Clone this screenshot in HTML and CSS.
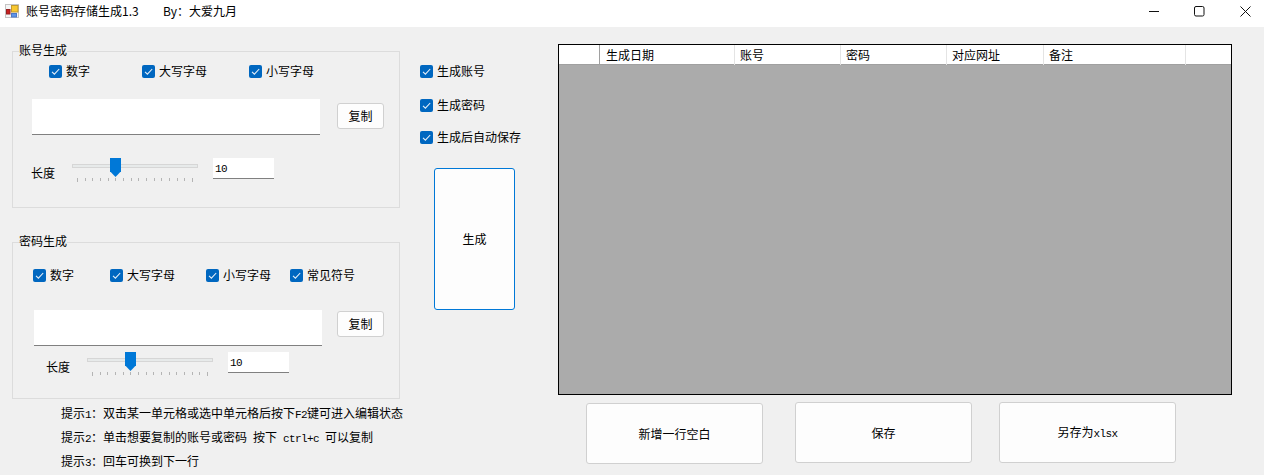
FILE: index.html
```html
<!DOCTYPE html>
<html>
<head>
<meta charset="utf-8">
<title>账号密码存储生成1.3</title>
<link rel="stylesheet" href="styles.css">
</head>
<body>
<svg class="defs" width="0" height="0">
  <symbol id="tick" viewBox="0 0 13 13">
    <rect width="13" height="13" rx="2" fill="#0067c0"/>
    <path d="M3 6.8 5.4 9.2 10.2 4" fill="none" stroke="#e6eff8" stroke-width="1.1"/>
  </symbol>
</svg>

<header class="titlebar">
  <svg class="app-icon" width="14" height="14" viewBox="0 0 14 14">
    <rect x="0.5" y="0.5" width="13" height="13" fill="#f4f4f4" stroke="#c4c4c4"/>
    <rect x="6.5" y="1.5" width="6.5" height="6.5" fill="#f8c830" stroke="#c09a30"/>
    <rect x="1.5" y="5.5" width="3.5" height="4.5" fill="#c82020" stroke="#982020"/>
    <rect x="6.5" y="9.5" width="5" height="3.5" fill="#5f94e8" stroke="#4a78c8"/>
  </svg>
  <span class="app-title">账号密码存储生成1.3</span>
  <span class="app-by">By：大爱九月</span>
  <div class="win-btns">
    <svg width="11" height="11" viewBox="0 0 11 11"><path d="M1 5.5H11" stroke="#111"/></svg>
    <svg width="11" height="11" viewBox="0 0 11 11"><rect x="0.5" y="0.5" width="9.5" height="9.5" rx="1.5" fill="none" stroke="#111"/></svg>
    <svg width="11" height="11" viewBox="0 0 11 11"><path d="M0.5 0.5 10.5 10.5M10.5 0.5 0.5 10.5" stroke="#111"/></svg>
  </div>
</header>

<main class="form">
  <section class="left">
    <fieldset class="group group-account">
      <legend>账号生成</legend>
      <div class="checks account-checks">
        <label class="check"><svg><use href="#tick"/></svg>数字</label>
        <label class="check"><svg><use href="#tick"/></svg>大写字母</label>
        <label class="check"><svg><use href="#tick"/></svg>小写字母</label>
      </div>
      <div class="output-row">
        <div class="textbox"></div>
        <button class="btn copy" type="button">复制</button>
      </div>
      <div class="length-row">
        <span class="length-label">长度</span>
        <div class="slider">
          <div class="track"></div>
          <div class="thumb"></div>
          <div class="ticks"><i></i><i></i><i></i><i></i><i></i><i></i><i></i><i></i><i></i><i></i><i></i><i></i><i></i><i></i><i></i><i></i></div>
        </div>
        <div class="numbox">10</div>
      </div>
    </fieldset>

    <fieldset class="group group-password">
      <legend>密码生成</legend>
      <div class="checks password-checks">
        <label class="check"><svg><use href="#tick"/></svg>数字</label>
        <label class="check"><svg><use href="#tick"/></svg>大写字母</label>
        <label class="check"><svg><use href="#tick"/></svg>小写字母</label>
        <label class="check"><svg><use href="#tick"/></svg>常见符号</label>
      </div>
      <div class="output-row">
        <div class="textbox"></div>
        <button class="btn copy" type="button">复制</button>
      </div>
      <div class="length-row">
        <span class="length-label">长度</span>
        <div class="slider">
          <div class="track"></div>
          <div class="thumb"></div>
          <div class="ticks"><i></i><i></i><i></i><i></i><i></i><i></i><i></i><i></i><i></i><i></i><i></i><i></i><i></i><i></i><i></i><i></i></div>
        </div>
        <div class="numbox">10</div>
      </div>
    </fieldset>

    <div class="hints">
      <p>提示<span class="mono">1</span>：双击某一单元格或选中单元格后按下<span class="mono">F2</span>键可进入编辑状态</p>
      <p>提示<span class="mono">2</span>：单击想要复制的账号或密码<span class="mono"> </span>按下<span class="mono"> ctrl+c </span>可以复制</p>
      <p>提示<span class="mono">3</span>：回车可换到下一行</p>
    </div>
  </section>

  <section class="middle">
    <label class="check"><svg><use href="#tick"/></svg>生成账号</label>
    <label class="check"><svg><use href="#tick"/></svg>生成密码</label>
    <label class="check"><svg><use href="#tick"/></svg>生成后自动保存</label>
    <button class="btn generate" type="button">生成</button>
  </section>

  <section class="right">
    <div class="datagrid">
      <div class="grid-head">
        <span></span>
        <span>生成日期</span>
        <span>账号</span>
        <span>密码</span>
        <span>对应网址</span>
        <span>备注</span>
        <span></span>
      </div>
    </div>
    <div class="actions">
      <button class="btn action action-add" type="button">新增一行空白</button>
      <button class="btn action action-save" type="button">保存</button>
      <button class="btn action action-saveas" type="button">另存为<span class="mono">xlsx</span></button>
    </div>
  </section>
</main>
</body>
</html>
```

FILE: styles.css
```css
html, body { height: 100%; }
body { margin: 0; overflow: hidden; display: flex; flex-direction: column; background: #f0f0f0; color: #000; font: 12px/16px "Noto Sans CJK SC", "Liberation Sans", sans-serif; }
.defs { position: absolute; }
.mono { font-family: "Liberation Mono", monospace; font-size: 11px; letter-spacing: -0.6px; }

.titlebar { flex: none; display: flex; align-items: flex-start; height: 27px; background: #fff; }
.app-icon { margin: 4px 0 0 5px; }
.app-title { margin: 3px 0 0 7px; width: 137px; }
.app-by { margin-top: 3px; }
.win-btns { display: flex; margin: 6px 13px 0 auto; gap: 35px; }

.form { flex: 1; display: flex; align-items: flex-start; }
.left { flex: none; width: 388px; margin-left: 12px; }
.middle { flex: none; width: 95px; margin: 37px 0 0 20px; display: flex; flex-direction: column; align-items: flex-start; }
.right { flex: none; width: 674px; margin: 17px 0 0 43px; }

.group { margin: 16px 0 0; padding: 0; height: 165px; box-sizing: border-box; border: 1px solid #dcdcdc; min-width: 0; }
.group legend { position: relative; top: -1px; margin-left: 6px; padding: 0; line-height: 16px; }
.group-password { margin-top: 26px; }

.check { display: flex; align-items: center; gap: 4px; height: 14px; white-space: nowrap; }
.check svg { flex: none; width: 13px; height: 13px; }
.checks { display: grid; }
.account-checks { margin: 5px 0 0 36px; grid-template-columns: 93px 107px auto; }
.password-checks { margin: 18px 0 0 20px; grid-template-columns: 77px 96px 84px auto; }

.output-row { display: flex; align-items: flex-start; }
.textbox { flex: none; width: 288px; height: 36px; box-sizing: border-box; background: #fff; border-bottom: 1px solid #808080; }
.btn { padding: 0; background: #fdfdfd; border: 1px solid #d0d0d0; border-radius: 3px; font: inherit; color: inherit; box-sizing: border-box; }
.copy { width: 47px; height: 26px; }
.group-account .output-row { margin: 21px 0 0 19px; }
.group-account .copy { margin: 4px 0 0 17px; }
.group-password .output-row { margin: 28px 0 0 21px; }
.group-password .copy { margin: 1px 0 0 15px; }

.length-row { display: flex; align-items: flex-start; }
.group-account .length-row { margin: 23px 0 0 18px; }
.group-password .length-row { margin: 6px 0 0 33px; }
.length-label { width: 41px; margin-top: 7px; }
.slider { position: relative; width: 126px; height: 26px; }
.track { margin-top: 6px; height: 4px; box-sizing: border-box; background: #e7eaea; border: 1px solid #d6d6d6; }
.thumb { position: absolute; left: 38px; top: 0; width: 11px; height: 19px; background: #0078d7; clip-path: polygon(0 0, 100% 0, 100% 70%, 50% 100%, 0 70%); }
.ticks { display: flex; justify-content: space-between; align-items: flex-start; margin: 10px 5px 0; }
.ticks i { width: 1px; height: 3px; background: #b4b4b4; }
.ticks i:first-child, .ticks i:last-child { height: 4px; }
.numbox { width: 61px; height: 21px; margin-left: 15px; box-sizing: border-box; padding: 3px 0 0 2px; background: #fff; border-bottom: 1px solid #808080; font-family: "Liberation Mono", monospace; font-size: 11px; letter-spacing: -0.6px; }

.hints { margin: 6px 0 0 49px; }
.hints p { margin: 0; height: 24px; line-height: 16px; white-space: pre; }

.middle .check { margin-bottom: 20px; }
.middle .check:nth-child(2) { margin-bottom: 18px; }
.generate { width: 81px; height: 142px; margin: 4px 0 0 14px; border-color: #0078d7; }

.datagrid { height: 351px; box-sizing: border-box; border: 1px solid #000; background: #ababab; }
.grid-head { display: grid; grid-template-columns: 41px 135px 106px 106px 97px 142px 1fr; height: 20px; box-sizing: border-box; background: #fff; border-bottom: 1px solid #a0a0a0; }
.grid-head span { padding-left: 5px; border-right: 1px solid #e4e4e4; line-height: 20px; }
.grid-head span:first-child { border-right: 1px solid #a0a0a0; }
.grid-head span:nth-child(2) { padding-left: 6px; }
.grid-head span:last-child { border-right: 0; }

.actions { display: flex; align-items: flex-start; margin: 7px 0 0 28px; }
.action { width: 177px; height: 61px; }
.action-add { margin-top: 1px; }
.action-save { margin-left: 32px; }
.action-saveas { margin-left: 27px; }
```
